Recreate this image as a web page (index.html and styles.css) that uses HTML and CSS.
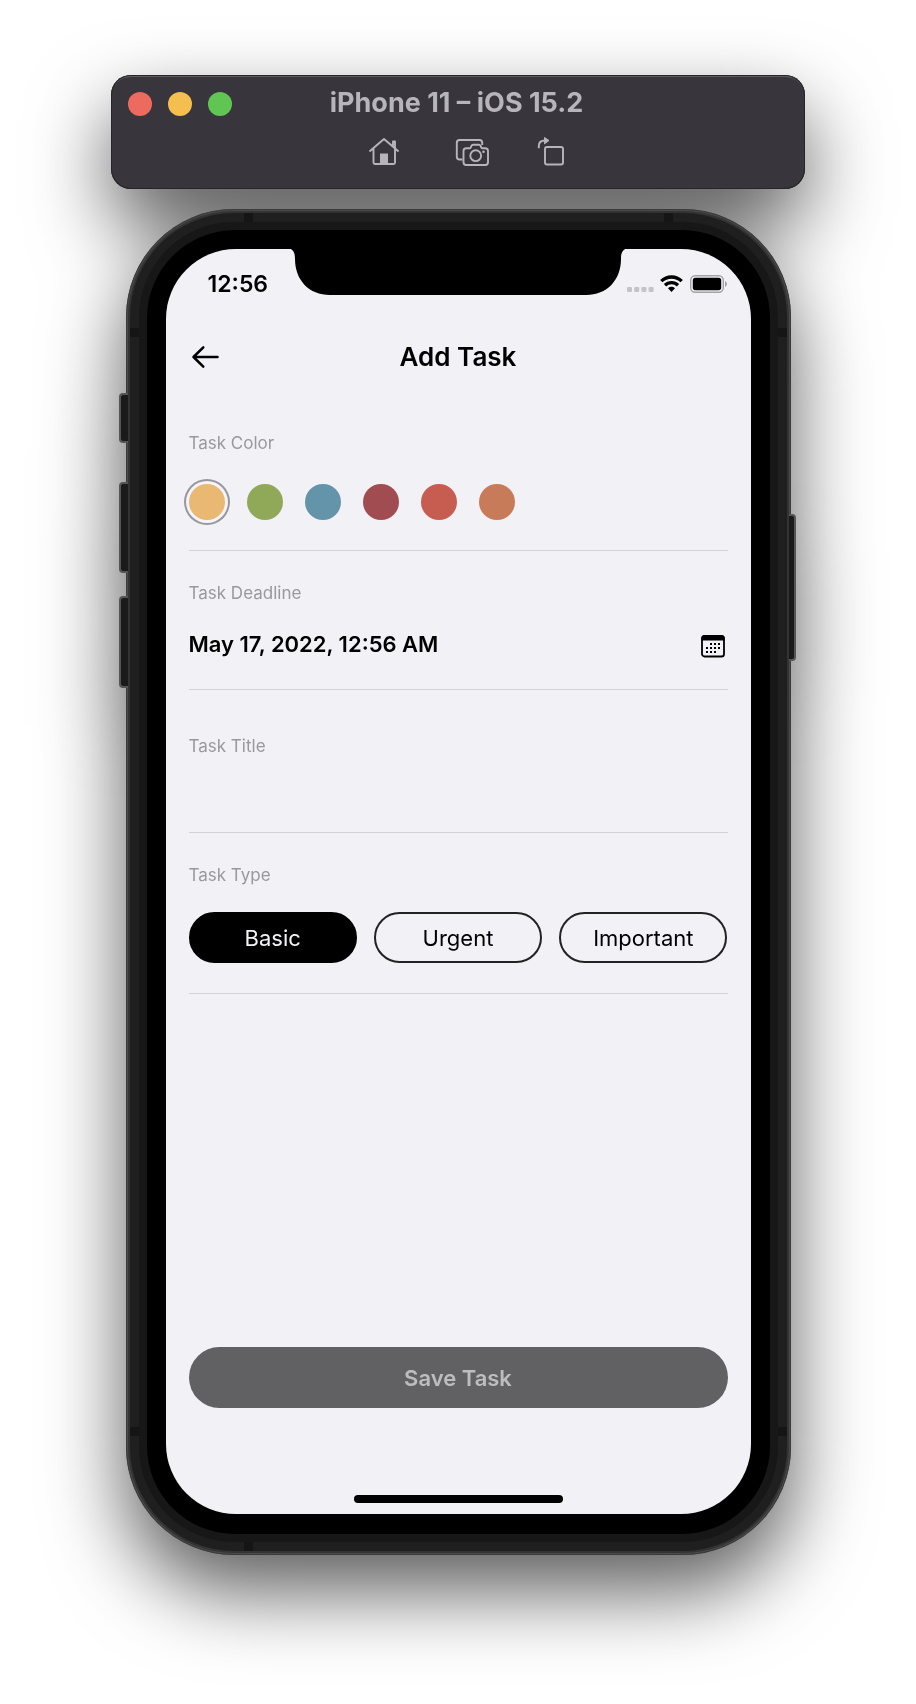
FILE: index.html
```html
<!DOCTYPE html>
<html lang="en">
<head>
<meta charset="utf-8">
<meta name="viewport" content="width=device-width, initial-scale=1">
<title>Add Task</title>
<link rel="stylesheet" href="styles.css">
</head>
<body>
<div class="simulator">
  <header class="toolbar">
    <div class="titlebar">
      <div class="lights">
        <button class="light light-close" aria-label="Close"></button>
        <button class="light light-minimize" aria-label="Minimize"></button>
        <button class="light light-zoom" aria-label="Zoom"></button>
      </div>
      <div class="window-title">iPhone 11 – iOS 15.2</div>
    </div>
    <div class="tools">
      <button class="tool" aria-label="Home">
        <svg width="38" height="34" viewBox="0 0 38 34" fill="none" stroke="currentColor" stroke-width="1.9" stroke-linecap="round" stroke-linejoin="round">
          <path d="M1 17 15 5l14 12M4.500 14.500V28.500q0 1.500 1.500 1.500H24.500q1.500 0 1.500-1.500V14.500M24 12V7.500h2V14"/>
          <path d="M11 19.500h8V30h-8z" fill="currentColor" stroke="none"/>
        </svg>
      </button>
      <button class="tool" aria-label="Screenshot">
        <svg width="34" height="34" viewBox="0 0 34 34" fill="none" stroke="currentColor" stroke-width="1.900" stroke-linejoin="round">
          <path d="M7.500 25.500H4.500Q1.800 25.500 1.800 22.800V8.700Q1.800 6 4.500 6H24.500Q27.200 6 27.200 8.700V11"/>
          <path d="M8.500 17q0-2.700 2.700-2.700h3.300q.8 0 1.200-.8l.7-1.600q.5-1.100 1.700-1.100h5.800q1.200 0 1.700 1.100l.7 1.600q.4.800 1.200.8h2.800Q33 14.300 33 17v11.300q0 2.700-2.700 2.700H11.200q-2.700 0-2.700-2.700z"/>
          <circle cx="20.700" cy="21.700" r="5.400"/>
          <circle cx="28.500" cy="17.700" r="1.300" fill="currentColor" stroke="none"/>
        </svg>
      </button>
      <button class="tool" aria-label="Rotate">
        <svg width="28" height="34" viewBox="0 0 28 34" fill="none" stroke="currentColor" stroke-width="1.900" stroke-linejoin="round">
          <rect x="8" y="13" width="18" height="17.500" rx="2"/>
          <path d="M1.800 14.300V12Q1.800 6.500 8 6.500"/>
          <path d="M7.500 3.500 12 6.500 7.500 9.800z" fill="currentColor" stroke-width="1"/>
        </svg>
      </button>
    </div>
  </header>

  <div class="phone">
    <span class="key key-mute"></span>
    <span class="key key-up"></span>
    <span class="key key-down"></span>
    <span class="key key-power"></span>
    <div class="band">
      <span class="seam seam-top seam-near"></span>
      <span class="seam seam-top seam-far"></span>
      <span class="seam seam-bottom seam-near"></span>
      <span class="seam-side seam-left seam-high"></span>
      <span class="seam-side seam-right seam-high"></span>
      <span class="seam-side seam-left seam-low"></span>
      <span class="seam-side seam-right seam-low"></span>
      <div class="edge">
        <div class="bezel">
          <main class="screen">
            <svg class="notch" width="344" height="47" viewBox="0 0 344 47" aria-hidden="true">
              <path d="M0 0C7 0 9 4 9 11C9 32 23 47 44 47H300C321 47 335 32 335 11C335 4 337 0 344 0Z" fill="#000"/>
            </svg>
            <div class="status">
              <time class="clock">12:56</time>
              <svg width="100" height="18" viewBox="0 0 100 18" role="img" aria-label="Wi-Fi connected, battery full">
                <g fill="#c3c3c8">
                  <rect x="0" y="12" width="5" height="5" rx="1.200"/>
                  <rect x="7.200" y="12" width="5" height="5" rx="1.200"/>
                  <rect x="14.400" y="12" width="5" height="5" rx="1.200"/>
                  <rect x="21.600" y="12" width="5" height="5" rx="1.200"/>
                </g>
                <g fill="none" stroke="#000" stroke-width="3.300">
                  <path d="M34.300 6.200a14.500 14.500 0 0 1 20.400 0"/>
                  <path d="M38 10.200a9.300 9.300 0 0 1 13 0"/>
                </g>
                <path d="M44.500 17 41 13.300a5 5 0 0 1 7 0z"/>
                <rect x="63.700" y=".7" width="32.600" height="16.600" rx="4.500" fill="none" stroke="#a3a3a7" stroke-width="1.400"/>
                <rect x="65.800" y="2.800" width="28.400" height="12.400" rx="2.600"/>
                <path d="M98 6q2 1 2 3t-2 3z" fill="#a3a3a7"/>
              </svg>
            </div>
            <div class="nav">
              <button class="back" aria-label="Back">
                <svg width="28" height="24" viewBox="0 0 28 24" fill="none" stroke="#000" stroke-width="2.500" stroke-linecap="round" stroke-linejoin="round"><path d="M26.500 12H2.500M12.300 2.300 2.500 12l9.800 9.700"/></svg>
              </button>
              <h1 class="title">Add Task</h1>
            </div>

            <form class="form">
              <div class="field" role="radiogroup" aria-labelledby="color-label">
                <span class="label" id="color-label">Task Color</span>
                <div class="swatches">
                  <input class="swatch yellow" type="radio" name="color" aria-label="Yellow" checked>
                  <input class="swatch green" type="radio" name="color" aria-label="Green">
                  <input class="swatch blue" type="radio" name="color" aria-label="Blue">
                  <input class="swatch maroon" type="radio" name="color" aria-label="Maroon">
                  <input class="swatch red" type="radio" name="color" aria-label="Red">
                  <input class="swatch orange" type="radio" name="color" aria-label="Orange">
                </div>
              </div>

              <div class="field">
                <span class="label">Task Deadline</span>
                <div class="deadline">
                  <time class="date">May 17, 2022, 12:56 AM</time>
                  <button class="calendar" type="button" aria-label="Choose a date">
                    <svg width="24" height="24" viewBox="0 0 24 24">
                      <rect x="1" y="2" width="22" height="20.500" rx="2.600" fill="none" stroke="#000" stroke-width="1.800"/>
                      <path d="M.5 6.500V4q0-2.800 2.800-2.800H20.700q2.800 0 2.800 2.800V6.500z"/>
                      <path d="M9 10h2M13 10h2M17 10h2M5 14h2M9 14h2M13 14h2M17 14h2M5 18h2M9 18h2M13 18h2" stroke="#000" stroke-width="2"/>
                    </svg>
                  </button>
                </div>
              </div>

              <div class="field field-title">
                <label class="label" for="task-title">Task Title</label>
                <input class="text" id="task-title" type="text">
              </div>

              <div class="field" role="group" aria-labelledby="type-label">
                <span class="label" id="type-label">Task Type</span>
                <div class="types">
                  <button class="type" type="button" aria-pressed="true">Basic</button>
                  <button class="type" type="button" aria-pressed="false">Urgent</button>
                  <button class="type" type="button" aria-pressed="false">Important</button>
                </div>
              </div>

              <button class="save" type="submit" disabled>Save Task</button>
            </form>
            <div class="home-indicator"></div>
          </main>
        </div>
      </div>
    </div>
  </div>
</div>
</body>
</html>
```

FILE: styles.css
```css
* {
  box-sizing: border-box;
}

body {
  margin: 0;
  padding: 75px 24px 149px;
  background: #fff;
  color: #000;
  font-family: Inter, "Liberation Sans", sans-serif;
  overflow-x: hidden;
}

button,
input {
  margin: 0;
  padding: 0;
  border: 0;
  background: none;
  color: inherit;
  font: inherit;
}

svg {
  display: block;
}

.simulator {
  max-width: 694px;
  margin: 0 auto;
  filter: drop-shadow(0 36px 40px rgba(0, 0, 0, 0.64));
}

/* Window toolbar */
.toolbar {
  padding-bottom: 21px;
  border-radius: 20px;
  background: #38363c;
  box-shadow: inset 0 0 0 1px #242628, inset 0 2px 0 #5c5c60;
  color: #b7b5bc;
}

.titlebar {
  display: grid;
  grid-template-columns: 1fr auto 1fr;
  align-items: center;
  padding: 12px 20px 0 17px;
}

.lights {
  display: flex;
  gap: 16px;
  padding-top: 2px;
}

.light {
  width: 24px;
  height: 24px;
  border-radius: 50%;
}

.light-close { background: #ed6a5e; }
.light-minimize { background: #f5bf4f; }
.light-zoom { background: #61c554; }

.window-title {
  font-size: 27px;
  font-weight: 700;
  line-height: 32px;
}

.tools {
  display: flex;
  justify-content: center;
  gap: 48px;
  padding: 15px 0 0 18px;
}

/* Device body */
.phone {
  position: relative;
  max-width: 665px;
  margin: 20px auto 0;
  padding: 4px;
  border-radius: 108px;
  background: #4a4a4a;
  box-shadow: inset 0 0 0 1px #3a3a3a;
}

.band {
  position: relative;
  padding: 9px;
  border-radius: 104px;
  background: #1f1f1f;
  box-shadow: 0 0 0 2px #333;
}

.edge {
  padding: 8px;
  border-radius: 95px;
  background: #171717;
}

.bezel {
  padding: 19px 19px 20px;
  border-radius: 88px;
  background: #000;
}

.key {
  position: absolute;
  left: -7px;
  width: 9px;
  border: 2px solid #555;
  border-right: 0;
  border-radius: 4px 0 0 4px;
  background: #1a1a1a;
}

.key-mute { top: 184px; height: 50px; }
.key-up { top: 273px; height: 91px; }
.key-down { top: 387px; height: 92px; }

.key-power {
  top: 305px;
  right: -5px;
  left: auto;
  height: 147px;
  border-right: 2px solid #555;
  border-left: 0;
  border-radius: 0 4px 4px 0;
}

.seam,
.seam-side {
  position: absolute;
  width: 9px;
  height: 9px;
  background: #151515;
}

.seam-top { top: 0; }
.seam-bottom { bottom: 0; }
.seam-near { left: 114px; }
.seam-far { right: 114px; }
.seam-left { left: 0; }
.seam-right { right: 0; }
.seam-high { top: 115px; }
.seam-low { bottom: 115px; }

/* App screen */
.screen {
  position: relative;
  display: flex;
  flex-direction: column;
  aspect-ratio: 585 / 1265;
  padding-bottom: 11px;
  border-radius: 70px;
  background: #f2f1f6;
}

.notch {
  position: absolute;
  top: -1px;
  left: 50%;
  max-width: 60%;
  transform: translateX(-50%);
}

.status {
  display: flex;
  align-items: center;
  justify-content: space-between;
  height: 70px;
  padding: 0 24px 0 42px;
}

.clock {
  font-size: 23px;
  font-weight: 600;
  line-height: 28px;
}

.nav {
  display: grid;
  grid-template-columns: 1fr auto 1fr;
  align-items: center;
  height: 76px;
  padding: 0 25px;
}

.back {
  justify-self: start;
}

.title {
  margin: 0;
  font-size: 26px;
  font-weight: 600;
  line-height: 32px;
}

.form {
  display: flex;
  flex: 1;
  flex-direction: column;
  padding: 6px 23px 87px;
}

.field {
  padding: 32px 0 30px;
  border-bottom: 1px solid #d3d3d7;
}

.label {
  display: block;
  color: #99989d;
  font-size: 17px;
  line-height: 20px;
}

.swatches {
  display: flex;
  gap: 22px;
  padding-top: 31px;
}

.swatch {
  width: 36px;
  height: 36px;
  border-radius: 50%;
  appearance: none;
}

.swatch:checked {
  box-shadow: 0 0 0 3px #f5f4f8, 0 0 0 5px #98979d;
}

.yellow { background: #e9b872; }
.green { background: #90a959; }
.blue { background: #6494aa; }
.maroon { background: #a14c50; }
.red { background: #c65d50; }
.orange { background: #c77b58; }

.deadline {
  display: flex;
  align-items: flex-end;
  justify-content: space-between;
  padding: 27px 3px 1px 0;
}

.date {
  font-size: 22px;
  font-weight: 600;
  line-height: 28px;
}

.field-title {
  padding: 46px 0 0;
}

.text {
  display: block;
  width: 100%;
  height: 76px;
  font-size: 22px;
  outline: 0;
}

.types {
  display: grid;
  grid-template-columns: repeat(3, 1fr);
  gap: 17px;
  padding-top: 27px;
}

.type {
  height: 51px;
  border: 2px solid #222;
  border-radius: 26px;
  font-size: 22px;
  line-height: 28px;
}

.type[aria-pressed="true"] {
  border-color: #000;
  background: #000;
  color: #f2f1f6;
}

.save {
  height: 61px;
  margin-top: auto;
  border-radius: 31px;
  background: #616163;
  color: #bdbdc0;
  font-size: 22px;
  font-weight: 600;
}

.home-indicator {
  width: 209px;
  height: 8px;
  margin: 0 auto;
  border-radius: 4px;
  background: #000;
}
```
